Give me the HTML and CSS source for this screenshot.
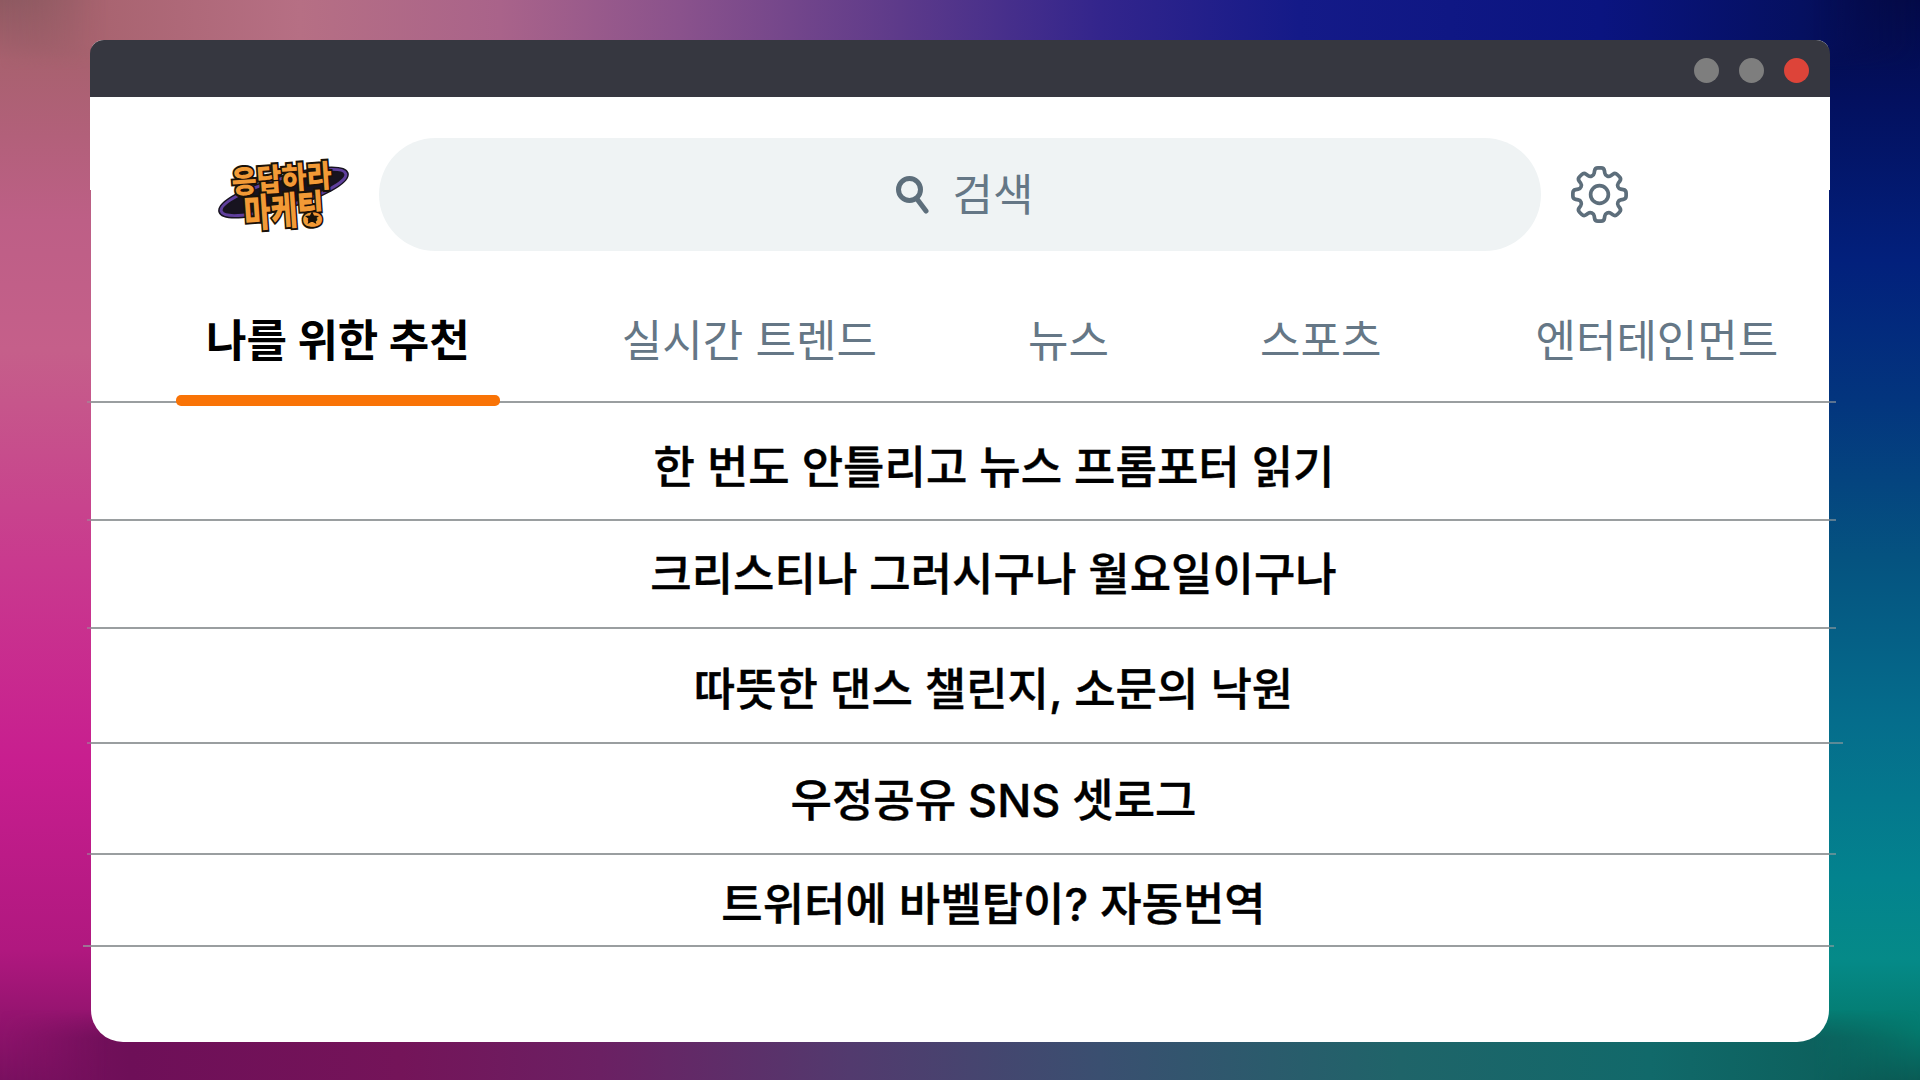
FILE: index.html
```html
<!DOCTYPE html>
<html lang="ko">
<head>
<meta charset="utf-8">
<title>검색</title>
<link rel="stylesheet" href="styles.css">
</head>
<body>
<main class="window">
  <div class="titlebar">
    <span class="dot"></span><span class="dot"></span><span class="dot dot-close"></span>
  </div>
  <header class="header">
    <svg class="logo" viewBox="0 0 150 100" aria-label="응답하라 마케팅">
      <g transform="rotate(-16.800 73.500 47.500)">
        <ellipse class="ring-out" cx="73.500" cy="47.500" rx="65" ry="14"/>
        <ellipse class="ring-in" cx="73.500" cy="47.500" rx="65" ry="14"/>
      </g>
      <text class="logo-text" x="72.500" y="45" transform="rotate(-4 72.500 45)" textLength="100" lengthAdjust="spacingAndGlyphs">응답하라</text>
      <text class="logo-text logo-text-b" x="75" y="80" transform="rotate(-4 75 80)" textLength="80" lengthAdjust="spacingAndGlyphs">마케팅</text>
      <path class="logo-star" d="M102 66l2 4.500 5 .4-3.800 3.200 1.200 4.900-4.400-2.600-4.400 2.600 1.200-4.900-3.800-3.200 5-.4z"/>
    </svg>
    <div class="search">
      <svg class="search-icon" viewBox="0 0 36 40" aria-hidden="true">
        <circle cx="14.500" cy="14.500" r="11"/>
        <path d="M22 24l9 12"/>
      </svg>
      <span class="search-label">검색</span>
    </div>
    <svg class="gear" viewBox="0 0 24 24" aria-label="설정">
      <path d="M10.343 3.940c.09-.542.56-.94 1.110-.94h1.093c.55 0 1.020.398 1.110.94l.149.894c.07.424.384.764.78.93.398.164.855.142 1.205-.108l.737-.527a1.125 1.125 0 011.450.12l.773.774c.39.389.44 1.002.12 1.450l-.527.737c-.25.35-.272.806-.107 1.204.165.397.505.71.93.78l.893.15c.543.09.94.56.94 1.109v1.094c0 .55-.397 1.020-.94 1.110l-.893.149c-.425.07-.765.383-.93.78-.165.398-.143.854.107 1.204l.527.738c.32.447.269 1.060-.12 1.450l-.774.773a1.125 1.125 0 01-1.449.12l-.738-.527c-.35-.25-.806-.272-1.203-.107-.397.165-.71.505-.781.929l-.149.894c-.09.542-.56.94-1.110.94h-1.094c-.55 0-1.019-.398-1.110-.94l-.148-.894c-.071-.424-.384-.764-.781-.93-.398-.164-.854-.142-1.204.108l-.738.527c-.447.32-1.060.269-1.450-.12l-.773-.774a1.125 1.125 0 01-.12-1.450l.527-.737c.25-.35.273-.806.108-1.204-.165-.397-.505-.71-.93-.78l-.894-.15c-.542-.09-.94-.56-.94-1.109v-1.094c0-.55.398-1.020.94-1.110l.894-.149c.424-.07.765-.383.93-.78.165-.398.143-.854-.108-1.204l-.526-.738a1.125 1.125 0 01.12-1.450l.773-.773a1.125 1.125 0 011.450-.12l.737.527c.35.25.807.272 1.204.107.397-.165.71-.505.78-.929l.15-.894z"/>
      <circle cx="12" cy="12" r="3"/>
    </svg>
  </header>
  <nav class="tabs">
    <a class="tab tab-active">나를 위한 추천</a>
    <a class="tab">실시간 트렌드</a>
    <a class="tab tab-pull">뉴스</a>
    <a class="tab tab-pull">스포츠</a>
    <a class="tab tab-last">엔터테인먼트</a>
  </nav>
  <ul class="list">
    <li class="row">한 번도 안틀리고 뉴스 프롬포터 읽기</li>
    <li class="row">크리스티나 그러시구나 월요일이구나</li>
    <li class="row">따뜻한 댄스 챌린지, 소문의 낙원</li>
    <li class="row">우정공유 SNS 셋로그</li>
    <li class="row">트위터에 바벨탑이? 자동번역</li>
  </ul>
</main>
</body>
</html>
```
FILE: styles.css
```css
* { box-sizing: border-box; }
html, body { margin: 0; height: 100%; }
body {
  position: relative;
  width: 1920px;
  height: 1080px;
  overflow: hidden;
  padding: 40px 0 0 91px;
  font-family: Inter, "Noto Sans CJK KR", sans-serif;
  background:
    linear-gradient(180deg, #8f5a62 0, #a8616f 60px, #bd5f86 220px, #c55f8a 350px, #c93a8e 560px, #c81e8f 760px, #b0187f 950px, #7a1060 1080px) left / 50% 100% no-repeat,
    linear-gradient(180deg, #040a48 0, #03105f 100px, #02207c 260px, #03357e 400px, #055380 560px, #056d8c 720px, #03838e 880px, #058a88 960px, #047a6e 1030px, #0a5c56 1080px) right / 50% 100% no-repeat;
}
body::before,
body::after {
  content: "";
  position: absolute;
  left: 0;
  width: 100%;
  height: 70px;
  -webkit-mask-composite: source-in;
  mask-composite: intersect;
}
body::before {
  top: 0;
  background: linear-gradient(90deg, #8f5a62 0, #a8636f 90px, #b66f84 300px, #a9638a 500px, #8a528c 680px, #5d3a8a 900px, #33258c 1100px, #141a88 1300px, #0a1480 1600px, #051060 1800px, #040a48 1920px);
  -webkit-mask-image: linear-gradient(90deg, transparent 0, #000 110px, #000 1810px, transparent 100%), linear-gradient(180deg, #000 44px, transparent 70px);
  mask-image: linear-gradient(90deg, transparent 0, #000 110px, #000 1810px, transparent 100%), linear-gradient(180deg, #000 44px, transparent 70px);
}
body::after {
  bottom: 0;
  background: linear-gradient(90deg, #7a1060 0, #6e0f58 130px, #741459 400px, #6b2063 600px, #523a6e 850px, #3a4f70 1100px, #1f6469 1400px, #11696a 1650px, #0a5c56 1920px);
  -webkit-mask-image: linear-gradient(90deg, transparent 0, #000 110px, #000 1810px, transparent 100%), linear-gradient(0deg, #000 42px, transparent 70px);
  mask-image: linear-gradient(90deg, transparent 0, #000 110px, #000 1810px, transparent 100%), linear-gradient(0deg, #000 42px, transparent 70px);
}

.window {
  position: relative;
  z-index: 1;
  width: 1738px;
  height: 1002px;
  display: flex;
  flex-direction: column;
  background: #fff;
  border-radius: 12px 12px 32px 32px;
}
.window::before {
  content: "";
  position: absolute;
  z-index: -1;
  top: 57px;
  left: -1px;
  right: -1px;
  height: 93px;
  background: #fff;
}

.titlebar {
  height: 57px;
  margin: 0 -1px;
  padding: 3px 21px 0 0;
  display: flex;
  align-items: center;
  justify-content: flex-end;
  gap: 20px;
  background: #363740;
  border-radius: 14px 14px 0 0;
}
.dot { width: 25px; height: 25px; border-radius: 50%; background: #7e7e7e; }
.dot-close { background: #dd4439; }

.header {
  padding: 41px 0 0 119px;
  display: flex;
  align-items: center;
}
.logo { width: 150px; height: 100px; flex: none; margin-right: 19px; overflow: visible; }
.ring-out { fill: #17131f; stroke: #17131f; stroke-width: 6; }
.ring-in { fill: none; stroke: #5f3f9c; stroke-width: 3; }
.logo-text {
  font-family: "Noto Sans CJK KR", sans-serif;
  font-weight: 900;
  font-size: 31px;
  text-anchor: middle;
  fill: #f29a36;
  stroke: #1a1208;
  stroke-width: 4px;
  paint-order: stroke;
}
.logo-text-b { font-size: 39px; }
.logo-star { fill: #1a1208; }

.search {
  width: 1162px;
  height: 113px;
  flex: none;
  display: flex;
  align-items: center;
  justify-content: center;
  gap: 22px;
  padding-left: 8px;
  background: #eff3f4;
  border-radius: 57px;
}
.search-icon { width: 36px; height: 40px; fill: none; stroke: #5d6e7b; stroke-width: 5; stroke-linecap: round; }
.search-label { font-size: 44px; line-height: 1; color: #657786; }

.gear {
  width: 71px;
  height: 71px;
  flex: none;
  margin-left: 23px;
  fill: none;
  stroke: #5d6e7b;
  stroke-width: 1.250;
}

.tabs {
  position: relative;
  height: 151px;
  padding: 0 0 0 85px;
  display: flex;
  align-items: flex-start;
  gap: 92px;
}
.tabs::after {
  content: "";
  position: absolute;
  left: -4px;
  right: -7px;
  bottom: -1px;
  height: 2px;
  background: linear-gradient(90deg, rgba(150,155,157,.5) 0 4px, #9a9ea0 4px calc(100% - 7px), rgba(150,155,157,.6) calc(100% - 7px));
}
.tab {
  position: relative;
  z-index: 1;
  padding: 57px 30px 0;
  height: 100%;
  font-size: 44px;
  line-height: 66px;
  white-space: nowrap;
  color: #657786;
}
.tab-pull { margin-left: -1px; }
.tab-last { margin-left: 2px; }
.tab-active { font-weight: 700; color: #000; }
.tab-active::after {
  content: "";
  position: absolute;
  left: 0;
  right: 0;
  bottom: -4px;
  height: 11px;
  border-radius: 5px;
  background: #f97306;
}

.list {
  margin: 0;
  padding: 0 0 0 67px;
  list-style: none;
  display: grid;
  grid-template-rows: 118px 108px 115px 111px 92px;
  font-size: 45px;
  font-weight: 500;
  -webkit-text-stroke: .4px #000;
  color: #000;
}
.row {
  position: relative;
  display: flex;
  align-items: center;
  justify-content: center;
  white-space: nowrap;
}
.row:nth-child(1) { padding: 7px 0 0 1px; }
.row:nth-child(2) { padding-bottom: 5px; }
.row:nth-child(3) { padding-top: 1px; }
.row:nth-child(4) { padding-bottom: 3px; }
.row:nth-child(5) { padding-top: 3px; }
.row::after {
  content: "";
  position: absolute;
  left: -71px;
  right: -7px;
  bottom: -1px;
  height: 2px;
  background: linear-gradient(90deg, rgba(150,155,157,.5) 0 4px, #9a9ea0 4px calc(100% - 7px), rgba(150,155,157,.6) calc(100% - 7px));
}
.row:nth-child(3)::after {
  right: -14px;
  background: linear-gradient(90deg, rgba(150,155,157,.5) 0 4px, #9a9ea0 4px calc(100% - 14px), rgba(150,155,157,.6) calc(100% - 14px));
}
.row:nth-child(5)::after {
  left: -75px;
  right: -5px;
  background: linear-gradient(90deg, rgba(150,155,157,.7) 0 8px, #9a9ea0 8px calc(100% - 5px), rgba(150,155,157,.6) calc(100% - 5px));
}
```
